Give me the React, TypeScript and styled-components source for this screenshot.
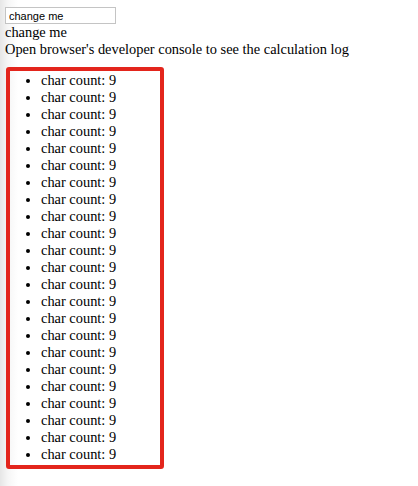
import React, { useState } from "react";
import styled, { createGlobalStyle } from "styled-components";

const Global = createGlobalStyle`
  html, body { margin: 0; padding: 0; }
  body {
    background: linear-gradient(to right, #e6e6e6 0px, #f6f6f6 8px, #ffffff 18px);
    min-height: 486px;
    font-family: "Liberation Serif", "Times New Roman", serif;
    font-size: 14.4px;
    line-height: 17px;
    color: #000;
  }
`;

const Page = styled.div`
  padding: 7px 0 0 5px;
`;

const Input = styled.input`
  display: block;
  box-sizing: border-box;
  width: 111px;
  height: 17px;
  margin: 0;
  padding: 0 3px;
  border: 1px solid #c4c4c4;
  background: #fff;
  font-family: "Liberation Sans", Arial, sans-serif;
  font-size: 11px;
  color: #000;
  outline: none;
`;

const Line = styled.div`
  height: 17px;
  white-space: nowrap;
`;

const Box = styled.ul`
  box-sizing: content-box;
  margin: 9px 0 0 1px;
  padding: 1px 0 2px 31px;
  width: 119px;
  border: 4px solid #e3251c;
  border-radius: 3px;
  list-style: disc;
`;

const Item = styled.li`
  height: 17px;
  line-height: 17px;
`;

export default function App() {
  const [value, setValue] = useState("change me");
  const items = Array.from({ length: 23 }, (_, i) => i);
  return (
    <Page>
      <Global />
      <Input value={value} onChange={(e) => setValue(e.target.value)} />
      <Line>{value}</Line>
      <Line>Open browser's developer console to see the calculation log</Line>
      <Box>
        {items.map((i) => (
          <Item key={i}>char count: {value.length}</Item>
        ))}
      </Box>
    </Page>
  );
}
